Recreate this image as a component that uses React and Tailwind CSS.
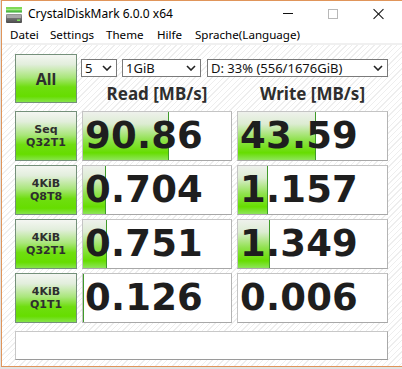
import React from "react";

const rows = [
  { label: ["Seq", "Q32T1"], read: "90.86", rw: 86, write: "43.59", ww: 78 },
  { label: ["4KiB", "Q8T8"], read: "0.704", rw: 23, write: "1.157", ww: 30 },
  { label: ["4KiB", "Q32T1"], read: "0.751", rw: 24, write: "1.349", ww: 32 },
  { label: ["4KiB", "Q1T1"], read: "0.126", rw: 1, write: "0.006", ww: 0 },
];

const menu = [
  { name: "Datei", w: "w-[40px]" },
  { name: "Settings", w: "w-[56px]" },
  { name: "Theme", w: "w-[51px]" },
  { name: "Hilfe", w: "w-[38px]" },
  { name: "Sprache(Language)", w: "" },
];

function AppIcon() {
  return (
    <svg width="16" height="16" viewBox="0 0 16 16" aria-hidden="true">
      <defs>
        <linearGradient id="g1" x1="0" y1="0" x2="0" y2="1">
          <stop offset="0" stopColor="#8fe06a" />
          <stop offset="1" stopColor="#2fa52f" />
        </linearGradient>
        <linearGradient id="g2" x1="0" y1="0" x2="0" y2="1">
          <stop offset="0" stopColor="#9a9a9a" />
          <stop offset="0.5" stopColor="#6f6f6f" />
          <stop offset="1" stopColor="#4a4a4a" />
        </linearGradient>
      </defs>
      <rect x="0" y="0" width="16" height="2.5" fill="#7ed957" />
      <rect x="0" y="2.5" width="16" height="3" fill="url(#g1)" />
      <rect x="0" y="7" width="16" height="9" rx="1" fill="url(#g2)" />
      <rect x="1" y="8" width="14" height="3" fill="#a8a8a8" />
      <rect x="11" y="12.5" width="3" height="1.5" fill="#7de35a" />
    </svg>
  );
}

function Chevron() {
  return (
    <svg width="10" height="6" viewBox="0 0 10 6" aria-hidden="true">
      <polyline
        points="1,1 5,5 9,1"
        fill="none"
        stroke="#222"
        strokeWidth="1.6"
      />
    </svg>
  );
}

function Select({ value, className }) {
  return (
    <div
      className={
        "h-[18px] bg-white border border-[#7a7a7a] flex items-center justify-between pl-[3px] pr-[4px] text-[13px] leading-none text-[#111] " +
        className
      }
    >
      <span>{value}</span>
      <Chevron />
    </div>
  );
}

function Meter({ value, width }) {
  return (
    <div className="relative h-[50px] bg-white border border-[#c4c4c4] border-b-[#a8a8a8] border-r-[#b4b4b4] flex items-center pl-[2px] overflow-hidden">
      {width > 0 && (
        <div
          className="absolute left-0 top-0 bottom-0 bg-[linear-gradient(180deg,#eef1ec_0%,#dcecd2_25%,#8fe24c_58%,#66dd00_85%,#8ee55a_100%)] border-r border-r-[#3f9a2a]"
          style={{ width: width + "px" }}
        />
      )}
      <span className="relative font-['DejaVu_Sans',sans-serif] font-bold text-[37px] leading-none text-[#1e1e1e] tracking-[0.2px]">
        {value}
      </span>
    </div>
  );
}

function GreenButton({ children, className }) {
  return (
    <div
      className={
        "border border-[#74907a] bg-[linear-gradient(180deg,#f4f6f2_0%,#e2eedc_20%,#a9e67a_48%,#6fde10_68%,#66dd00_88%,#86e44a_100%)] flex flex-col items-center justify-center text-center font-bold text-[#2e2e2e] " +
        className
      }
    >
      {children}
    </div>
  );
}

export default function App() {
  return (
    <div className="w-[402px] h-[369px] bg-[#e2e2e2] overflow-hidden font-['Noto_Sans',sans-serif]">
      <div className="ml-[1px] w-[402px] h-[367px] border border-[#e0955a] bg-white flex flex-col">
        <div className="h-[25px] flex items-center shrink-0">
          <div className="ml-[4px] mt-[2px]">
            <AppIcon />
          </div>
          <span className="ml-[6px] text-[12px] text-black">
            CrystalDiskMark 6.0.0 x64
          </span>
          <div className="ml-auto flex items-center h-full mr-[18px]">
            <div className="w-[10px] h-[1px] bg-[#111]" />
            <div className="ml-[35px] w-[10px] h-[10px] border border-[#b8b8b8]" />
            <div className="ml-[35px] w-[11px] h-[11px] relative">
              <div className="absolute left-[5px] -top-[1px] w-[1px] h-[14px] bg-[#111] rotate-45" />
              <div className="absolute left-[5px] -top-[1px] w-[1px] h-[14px] bg-[#111] -rotate-45" />
            </div>
          </div>
        </div>
        <div className="h-[17px] flex items-center pl-[8px] text-[11.6px] text-black shrink-0">
          {menu.map((m) => (
            <span key={m.name} className={m.w}>
              {m.name}
            </span>
          ))}
        </div>
        <div className="h-[2px] bg-[#f0f0f0] shrink-0" />
        <div className="flex-1 bg-[repeating-linear-gradient(135deg,#ffffff_0px,#ffffff_3px,#eeeeee_3px,#eeeeee_4px)] pl-[13px] pt-[9px]">
          <div className="grid grid-cols-[62px_150px_151px] gap-x-[5px] gap-y-[4px]">
            <GreenButton className="h-[49px] text-[16px] mb-[1px]">All</GreenButton>
            <div className="col-span-2 flex flex-col">
              <div className="flex mt-[5px] -ml-[1px] gap-[5px]">
                <Select value="5" className="w-[36px]" />
                <Select value="1GiB" className="w-[79px]" />
                <Select value="D: 33% (556/1676GiB)" className="w-[181px] ml-[1px]" />
              </div>
              <div className="grid grid-cols-[150px_151px] gap-x-[5px] flex-1 items-center text-[17px] font-bold text-[#2e2e2e] text-center pt-[4px]">
                <span>Read [MB/s]</span>
                <span>Write [MB/s]</span>
              </div>
            </div>
            {rows.map((r, i) => (
              <React.Fragment key={i}>
                <GreenButton className="h-[50px] font-['DejaVu_Sans',sans-serif] text-[11px] leading-[13px]">
                  <span>
                    {r.label[0]}
                    <br />
                    {r.label[1]}
                  </span>
                </GreenButton>
                <Meter value={r.read} width={r.rw} />
                <Meter value={r.write} width={r.ww} />
              </React.Fragment>
            ))}
          </div>
          <div className="mt-[8px] w-[373px] h-[29px] bg-white border border-[#c8c8c8] border-b-[#9a9a9a] border-r-[#a8a8a8]" />
        </div>
      </div>
    </div>
  );
}
